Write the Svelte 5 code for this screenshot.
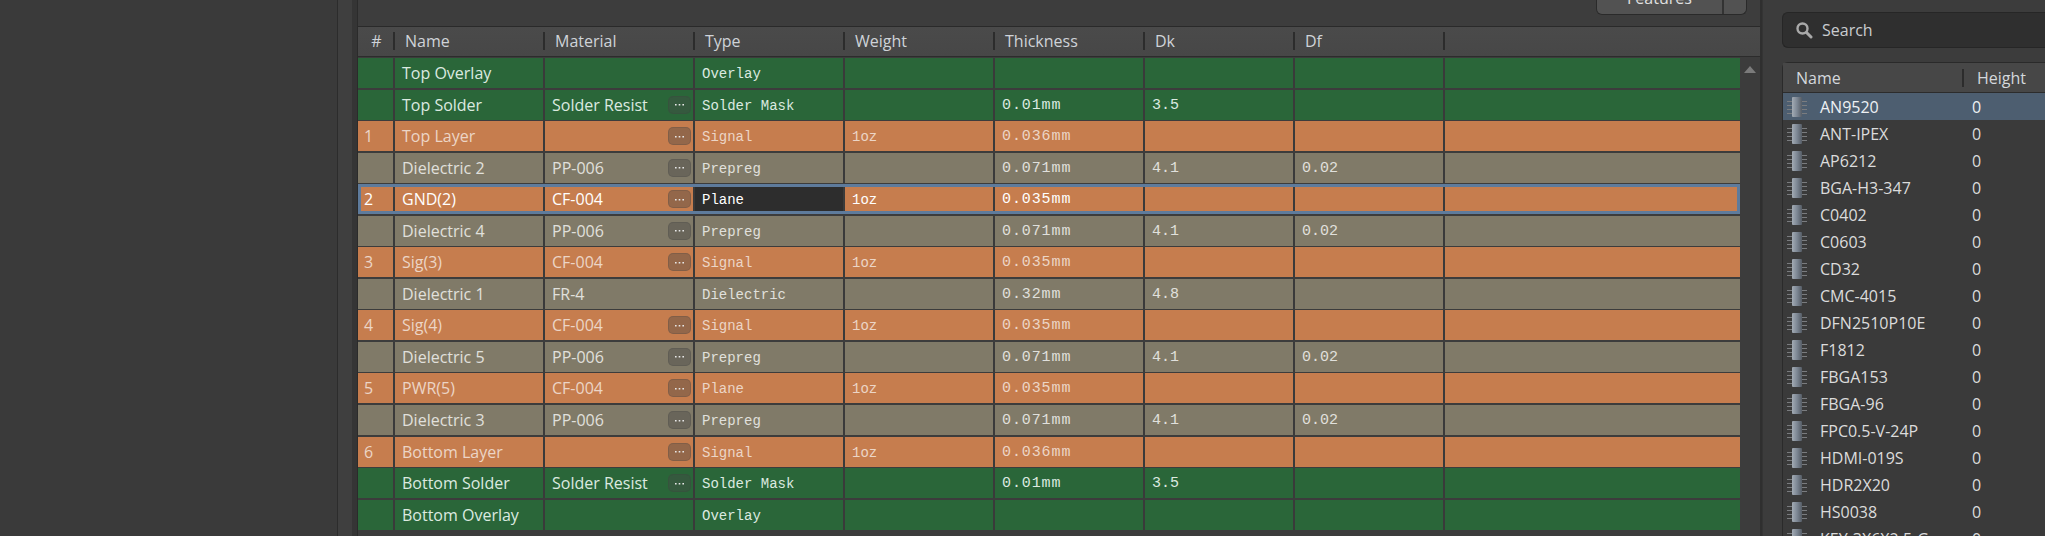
<script>
  const columns = ['Name', 'Material', 'Type', 'Weight', 'Thickness', 'Dk', 'Df'];

  const layers = [
    { kind: 'green', name: 'Top Overlay', type: 'Overlay' },
    { kind: 'green', name: 'Top Solder', material: 'Solder Resist', btn: true, type: 'Solder Mask', thick: '0.01mm', dk: '3.5' },
    { kind: 'copper', num: 1, name: 'Top Layer', btn: true, type: 'Signal', weight: '1oz', thick: '0.036mm' },
    { kind: 'diel', name: 'Dielectric 2', material: 'PP-006', btn: true, type: 'Prepreg', thick: '0.071mm', dk: '4.1', df: '0.02' },
    { kind: 'copper', num: 2, name: 'GND(2)', material: 'CF-004', btn: true, type: 'Plane', weight: '1oz', thick: '0.035mm', selected: true },
    { kind: 'diel', name: 'Dielectric 4', material: 'PP-006', btn: true, type: 'Prepreg', thick: '0.071mm', dk: '4.1', df: '0.02' },
    { kind: 'copper', num: 3, name: 'Sig(3)', material: 'CF-004', btn: true, type: 'Signal', weight: '1oz', thick: '0.035mm' },
    { kind: 'diel', name: 'Dielectric 1', material: 'FR-4', type: 'Dielectric', thick: '0.32mm', dk: '4.8' },
    { kind: 'copper', num: 4, name: 'Sig(4)', material: 'CF-004', btn: true, type: 'Signal', weight: '1oz', thick: '0.035mm' },
    { kind: 'diel', name: 'Dielectric 5', material: 'PP-006', btn: true, type: 'Prepreg', thick: '0.071mm', dk: '4.1', df: '0.02' },
    { kind: 'copper', num: 5, name: 'PWR(5)', material: 'CF-004', btn: true, type: 'Plane', weight: '1oz', thick: '0.035mm' },
    { kind: 'diel', name: 'Dielectric 3', material: 'PP-006', btn: true, type: 'Prepreg', thick: '0.071mm', dk: '4.1', df: '0.02' },
    { kind: 'copper', num: 6, name: 'Bottom Layer', btn: true, type: 'Signal', weight: '1oz', thick: '0.036mm' },
    { kind: 'green', name: 'Bottom Solder', material: 'Solder Resist', btn: true, type: 'Solder Mask', thick: '0.01mm', dk: '3.5' },
    { kind: 'green', name: 'Bottom Overlay', type: 'Overlay' }
  ];

  const parts = ['AN9520', 'ANT-IPEX', 'AP6212', 'BGA-H3-347', 'C0402', 'C0603', 'CD32', 'CMC-4015', 'DFN2510P10E',
    'F1812', 'FBGA153', 'FBGA-96', 'FPC0.5-V-24P', 'HDMI-019S', 'HDR2X20', 'HS0038', 'KEY-3X6X2.5-G'];
</script>

<div class="page">
  <div class="left"></div>
  <div class="strip"></div>

  <div class="main">
    <div class="toolbar">
      <div class="features"><span class="features-label">Features</span><span class="features-arrow"></span></div>
    </div>
    <div class="thead">
      <div class="th num">#</div>
      {#each columns as col}
        <div class="th">{col}</div>
      {/each}
    </div>
    <div class="body">
      <div class="rows">
        {#each layers as l}
          <div class="row {l.kind}" class:selected={l.selected}>
            <div class="cell num">{l.num ?? ''}</div>
            <div class="cell name">{l.name}</div>
            <div class="cell name">
              <span>{l.material ?? ''}</span>
              {#if l.btn}
                <span class="more">
                  <svg width="9" height="3" viewBox="0 0 9 3"><path d="M0 1h1.6v1.4H0zM3.7 1h1.6v1.4H3.7zM7.4 1H9v1.4H7.4z" fill="#e8e8e8" /></svg>
                </span>
              {/if}
            </div>
            <div class="cell mono type">{l.type}</div>
            <div class="cell mono">{l.weight ?? ''}</div>
            <div class="cell mono value thick">{l.thick ?? ''}</div>
            <div class="cell mono value">{l.dk ?? ''}</div>
            <div class="cell mono value">{l.df ?? ''}</div>
            <div class="cell rest"></div>
          </div>
        {/each}
      </div>
      <div class="scroll"><svg width="12" height="7" viewBox="0 0 12 7"><path d="M6 0 L12 7 L0 7 Z" fill="#7b7b7b" /></svg></div>
    </div>
  </div>

  <div class="side">
    <div class="search">
      <svg width="18" height="18" viewBox="0 0 18 18" fill="none">
        <circle cx="7.5" cy="7.5" r="5" stroke="#a9a9a9" stroke-width="2.4" />
        <path d="M11.5 11.5 L16 16" stroke="#a9a9a9" stroke-width="3" stroke-linecap="round" />
      </svg>
      <span>Search</span>
    </div>
    <div class="list">
      <div class="list-head">
        <div class="lh name-col">Name</div>
        <div class="lh">Height</div>
      </div>
      <div class="items">
        {#each parts as part, i}
          <div class="item" class:active={i === 0}>
            <svg class="chip" width="20" height="20" viewBox="0 0 20 20">
              <defs>
                <linearGradient id="chip{i}" x1="0" x2="1" y1="0" y2="0">
                  <stop offset="0" stop-color="#a3abb4" />
                  <stop offset="0.5" stop-color="#7d8794" />
                  <stop offset="1" stop-color="#565d66" />
                </linearGradient>
              </defs>
              <path d="M0 4.5h20M0 8.5h20M0 12.5h20M0 16.5h20" stroke="#7a7c7f" stroke-width="1" />
              <rect x="5" y="0" width="10" height="20" rx="1" fill="url(#chip{i})" />
            </svg>
            <span class="part">{part}</span>
            <span class="height">0</span>
          </div>
        {/each}
      </div>
    </div>
  </div>
</div>

<style>
  :global(body) {
    margin: 0;
    background: #3c3c3c;
  }
  .page {
    display: flex;
    height: 536px;
    width: 2045px;
    overflow: hidden;
    font-family: "Open Sans", "Noto Sans", sans-serif;
    font-size: 16px;
    color: #d6d6d6;
    background: #3c3c3c;
  }
  .left {
    width: 337px;
    flex: none;
    background: #3a3a3a;
    border-right: 1px solid #2c2c2c;
  }
  .strip {
    width: 19px;
    flex: none;
    box-sizing: border-box;
    background: #3f3f3f;
    border-right: 5px solid #353535;
  }
  .main {
    width: 1405px;
    flex: none;
    border-left: 1px solid #2b2b2b;
    border-right: 2px solid #2f2f2f;
    box-sizing: border-box;
  }
  .toolbar {
    height: 26px;
    display: flex;
    justify-content: flex-end;
    padding-right: 13px;
    border-bottom: 1px solid #2a2a2a;
    background: #3d3d3d;
  }
  .features {
    height: 14px;
    width: 149px;
    display: flex;
    background: #525252;
    border: 1px solid #2a2a2a;
    border-top: 0;
    border-radius: 0 0 6px 6px;
    overflow: hidden;
    line-height: 0;
  }
  .features-label {
    flex: 1;
    text-align: center;
    color: #e0e0e0;
    margin-top: -2px;
  }
  .features-arrow {
    width: 22px;
    border-left: 2px solid #333;
  }
  .thead {
    display: flex;
    height: 29px;
    background: linear-gradient(#4a4a4a, #474747);
    border-bottom: 1px solid #2c2c2c;
  }
  .th {
    width: 150px;
    flex: none;
    box-sizing: border-box;
    padding-left: 10px;
    line-height: 29px;
    color: #cfd3d8;
    position: relative;
  }
  .th.num {
    width: 37px;
    padding: 0;
    text-align: center;
  }
  .th::after {
    content: '';
    position: absolute;
    right: 0;
    top: 5px;
    bottom: 6px;
    width: 2px;
    background: #2c2c2c;
  }
  .body {
    display: flex;
    padding-top: 1px;
  }
  .rows {
    display: flex;
    flex-direction: column;
    gap: 1.55px;
    width: 1382px;
  }
  .row {
    display: flex;
    height: 30px;
    flex: none;
  }
  .row.green {
    background: #2a6639;
    color: #dceae0;
  }
  .row.copper {
    background: #c67d4e;
    color: #ecd5c6;
  }
  .row.diel {
    background: #807a68;
    color: #e0e0dc;
  }
  .row.selected {
    color: #fff;
    outline: 3px solid #5e7b9c;
    outline-offset: -3px;
  }
  .cell {
    width: 150px;
    flex: none;
    box-sizing: border-box;
    padding-left: 7px;
    padding-right: 2px;
    border-right: 2px solid #3a3a3a;
    display: flex;
    align-items: center;
    justify-content: space-between;
    line-height: 30px;
    white-space: nowrap;
  }
  .cell.num {
    width: 37px;
    padding-left: 6px;
  }
  .cell.rest {
    flex: 1;
    width: auto;
    border-right: 0;
  }
  .mono {
    font-family: "Liberation Mono", monospace;
    font-size: 14px;
    padding-top: 2px;
  }
  .value {
    font-size: 15px;
  }
  .thick {
    letter-spacing: 0.9px;
  }
  .row.selected .type {
    background: #2d2d2d;
  }
  .more {
    width: 23px;
    height: 18px;
    flex: none;
    display: flex;
    align-items: center;
    justify-content: center;
    border-radius: 5px;
    background: rgba(70, 70, 70, 0.4);
    border: 1px solid rgba(60, 60, 60, 0.2);
    box-sizing: border-box;
  }
  .scroll {
    flex: 1;
    text-align: center;
    padding-top: 8px;
    line-height: 0;
    background: #3c3c3c;
  }
  .side {
    flex: 1;
    padding-left: 19px;
    border-left: 1px solid #343434;
    background: #3c3c3c;
  }
  .search {
    margin-top: 12px;
    height: 36px;
    box-sizing: border-box;
    background: #2f2f2f;
    border: 1px solid #262626;
    border-right: 0;
    border-radius: 6px 0 0 6px;
    display: flex;
    align-items: center;
    gap: 9px;
    padding-left: 12px;
    color: #c9ccd0;
  }
  .list {
    margin-top: 14px;
    border: 1px solid #2a2a2a;
    border-right: 0;
    border-bottom: 0;
    border-radius: 6px 0 0 0;
    background: #3a3a3a;
  }
  .list-head {
    display: flex;
    height: 29px;
    background: #474747;
    border-bottom: 1px solid #2c2c2c;
    line-height: 30px;
    color: #d4d8dc;
  }
  .lh {
    padding-left: 13px;
  }
  .name-col {
    width: 181px;
    box-sizing: border-box;
    position: relative;
  }
  .name-col::after {
    content: '';
    position: absolute;
    right: 0;
    top: 6px;
    bottom: 5px;
    width: 2px;
    background: #2c2c2c;
  }
  .item {
    display: flex;
    align-items: center;
    height: 27px;
    color: #dcdcdc;
  }
  .item.active {
    background: #4d5e70;
    color: #eef1f4;
  }
  .chip {
    margin-left: 4px;
    flex: none;
  }
  .part {
    width: 152px;
    margin-left: 13px;
    flex: none;
    white-space: nowrap;
  }
  .height {
    flex: 1;
  }
</style>
